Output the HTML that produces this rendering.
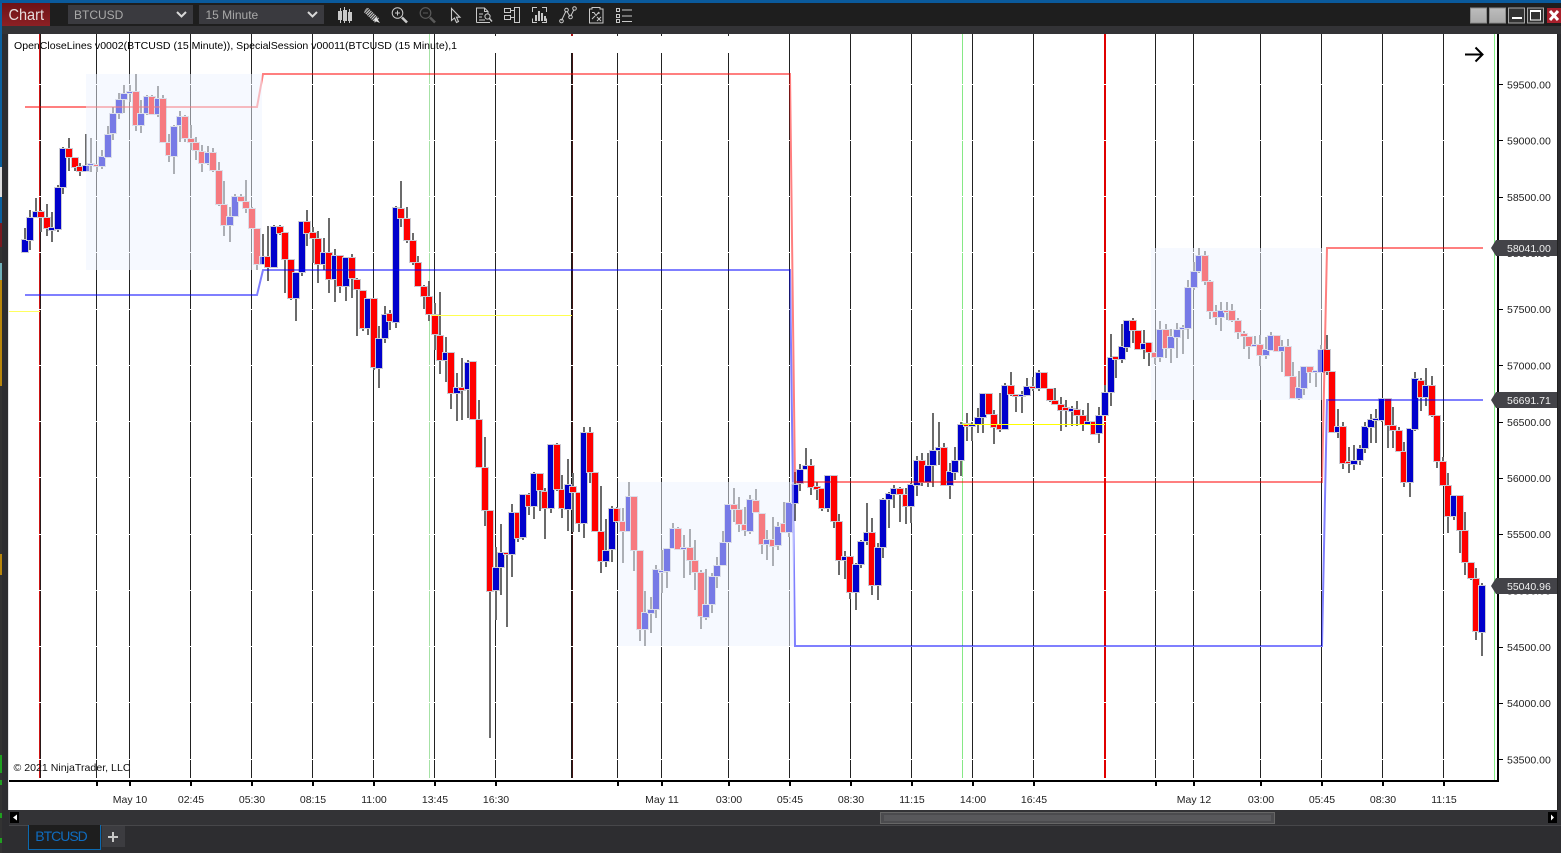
<!DOCTYPE html>
<html><head><meta charset="utf-8"><title>Chart</title>
<style>
html,body{margin:0;padding:0;width:1561px;height:853px;overflow:hidden;background:#2d2d30}
svg{display:block;font-family:"Liberation Sans",Arial,sans-serif}
.r{shape-rendering:crispEdges}
.ic{fill:none;stroke:#c9c9c9;stroke-width:1}
</style></head><body>
<svg xmlns="http://www.w3.org/2000/svg" width="1561" height="853" viewBox="0 0 1561 853">
<rect class="r" x="0" y="0" width="1561" height="853" fill="#2d2d30"/>
<!-- title bar -->
<rect class="r" x="0" y="0" width="1561" height="3" fill="#0a5a9c"/>
<rect class="r" x="0" y="3" width="1561" height="23" fill="#1e1e1e"/>
<rect class="r" x="0" y="26" width="1561" height="8" fill="#333336"/>
<!-- left strip -->
<rect class="r" x="0" y="34" width="2" height="820" fill="#333"/>
<rect class="r" x="0" y="3" width="2" height="164" fill="#0a5f9e"/>
<rect class="r" x="0" y="167" width="2" height="30" fill="#ddd"/>
<rect class="r" x="0" y="197" width="2" height="26" fill="#0a5f9e"/>
<rect class="r" x="0" y="223" width="2" height="24" fill="#7a1a20"/>
<rect class="r" x="0" y="263" width="2" height="17" fill="#70b0b8"/>
<rect class="r" x="0" y="280" width="2" height="106" fill="#b8860b"/>
<rect class="r" x="0" y="554" width="2" height="21" fill="#b8860b"/>
<rect class="r" x="0" y="755" width="2" height="18" fill="#20a020"/>
<rect class="r" x="0" y="780" width="2" height="5" fill="#20a020"/>
<rect class="r" x="0" y="813" width="2" height="5" fill="#20a020"/>
<rect class="r" x="0" y="838" width="2" height="5" fill="#20a020"/>
<rect class="r" x="8" y="34" width="1" height="776" fill="#e2e2e2"/>
<!-- chart area -->
<rect class="r" x="9" y="34" width="1548" height="776" fill="#fff"/>
<rect class="r" x="1557" y="34" width="1" height="776" fill="#222"/>
<g id="c"></g>
<!-- axes -->
<rect class="r" x="1494" y="34" width="1" height="746" fill="#86f086"/>
<rect class="r" x="1497" y="34" width="2" height="748" fill="#000"/>
<rect class="r" x="9" y="780" width="1490" height="2" fill="#000"/>
<g class="r" fill="#000">
<rect x="96" y="782" width="2" height="4"/><rect x="129" y="782" width="2" height="4"/><rect x="190" y="782" width="2" height="4"/><rect x="251" y="782" width="2" height="4"/><rect x="312" y="782" width="2" height="4"/><rect x="373" y="782" width="2" height="4"/><rect x="434" y="782" width="2" height="4"/><rect x="495" y="782" width="2" height="4"/><rect x="617" y="782" width="2" height="4"/><rect x="661" y="782" width="2" height="4"/><rect x="728" y="782" width="2" height="4"/><rect x="789" y="782" width="2" height="4"/><rect x="850" y="782" width="2" height="4"/><rect x="911" y="782" width="2" height="4"/><rect x="972" y="782" width="2" height="4"/><rect x="1033" y="782" width="2" height="4"/><rect x="1155" y="782" width="2" height="4"/><rect x="1193" y="782" width="2" height="4"/><rect x="1260" y="782" width="2" height="4"/><rect x="1321" y="782" width="2" height="4"/><rect x="1382" y="782" width="2" height="4"/><rect x="1443" y="782" width="2" height="4"/>
<rect x="1499" y="84" width="4" height="1"/><rect x="1499" y="140" width="4" height="1"/><rect x="1499" y="197" width="4" height="1"/><rect x="1499" y="253" width="4" height="1"/><rect x="1499" y="309" width="4" height="1"/><rect x="1499" y="365" width="4" height="1"/><rect x="1499" y="422" width="4" height="1"/><rect x="1499" y="478" width="4" height="1"/><rect x="1499" y="534" width="4" height="1"/><rect x="1499" y="590" width="4" height="1"/><rect x="1499" y="647" width="4" height="1"/><rect x="1499" y="703" width="4" height="1"/><rect x="1499" y="759" width="4" height="1"/>
</g>
<g font-size="10.5" fill="#1e1e1e" text-anchor="middle">
<text x="130" y="803">May 10</text><text x="191" y="803">02:45</text><text x="252" y="803">05:30</text><text x="313" y="803">08:15</text><text x="374" y="803">11:00</text><text x="435" y="803">13:45</text><text x="496" y="803">16:30</text><text x="662" y="803">May 11</text><text x="729" y="803">03:00</text><text x="790" y="803">05:45</text><text x="851" y="803">08:30</text><text x="912" y="803">11:15</text><text x="973" y="803">14:00</text><text x="1034" y="803">16:45</text><text x="1194" y="803">May 12</text><text x="1261" y="803">03:00</text><text x="1322" y="803">05:45</text><text x="1383" y="803">08:30</text><text x="1444" y="803">11:15</text>
</g>
<g font-size="10.5" fill="#1e1e1e">
<text x="1507" y="88.5">59500.00</text><text x="1507" y="144.5">59000.00</text><text x="1507" y="201">58500.00</text><text x="1507" y="257">58000.00</text><text x="1507" y="313">57500.00</text><text x="1507" y="369.5">57000.00</text><text x="1507" y="426">56500.00</text><text x="1507" y="482">56000.00</text><text x="1507" y="538">55500.00</text><text x="1507" y="594.5">55000.00</text><text x="1507" y="651">54500.00</text><text x="1507" y="707">54000.00</text><text x="1507" y="763.5">53500.00</text>
</g>
<!-- price markers -->
<g fill="#434348">
<polygon points="1491,248 1496,240 1557,240 1557,256 1496,256"/>
<polygon points="1491,400 1496,392 1557,392 1557,408 1496,408"/>
<polygon points="1491,586 1496,578 1557,578 1557,594 1496,594"/>
</g>
<g font-size="10.5" fill="#f0f0f0">
<text x="1507" y="252">58041.00</text><text x="1507" y="404">56691.71</text><text x="1507" y="590">55040.96</text>
</g>
<!-- labels -->
<text x="14" y="49" font-size="10.5" fill="#000" textLength="443" lengthAdjust="spacingAndGlyphs">OpenCloseLines v0002(BTCUSD (15 Minute)), SpecialSession v00011(BTCUSD (15 Minute),1</text>
<text x="13.5" y="771" font-size="10.5" fill="#111" textLength="117" lengthAdjust="spacingAndGlyphs">© 2021 NinjaTrader, LLC</text>
<path d="M1465 54.5H1482.5M1475.5 47.5L1482.5 54.5L1475.5 61.5" fill="none" stroke="#000" stroke-width="2"/>
<!-- toolbar -->
<defs><linearGradient id="cb" x1="0" y1="0" x2="0" y2="1"><stop offset="0" stop-color="#6e1216"/><stop offset="1" stop-color="#8c2024"/></linearGradient>
<linearGradient id="gb" x1="0" y1="0" x2="0" y2="1"><stop offset="0" stop-color="#bdbdbd"/><stop offset="1" stop-color="#a8a8a8"/></linearGradient></defs>
<rect class="r" x="2" y="3" width="48" height="23" fill="url(#cb)"/>
<text x="8.5" y="20" font-size="16" fill="#e6dcdc" textLength="35.5" lengthAdjust="spacingAndGlyphs">Chart</text>
<rect class="r" x="68" y="5" width="125" height="19" fill="#3a3a3f"/>
<text x="74" y="19" font-size="12" fill="#a9a9a9">BTCUSD</text>
<path d="M177 12l4.5 4.5 4.5-4.5" fill="none" stroke="#d8d8d8" stroke-width="2"/>
<rect class="r" x="199" y="5" width="125" height="19" fill="#3a3a3f"/>
<text x="205.5" y="19" font-size="12" fill="#a9a9a9">15 Minute</text>
<path d="M308 12l4.5 4.5 4.5-4.5" fill="none" stroke="#d8d8d8" stroke-width="2"/>
<!-- 1 candles -->
<g fill="#c9c9c9" class="r"><rect x="340" y="8" width="1" height="15"/><rect x="338" y="11" width="4" height="9"/><rect x="344" y="7" width="1" height="16"/><rect x="343" y="10" width="4" height="11"/><rect x="349" y="9" width="1" height="14"/><rect x="348" y="12" width="4" height="9"/></g>
<!-- 2 pencil -->
<path d="M366 10L377 20.5" stroke="#c9c9c9" stroke-width="6" stroke-dasharray="1.2 .8" fill="none"/>
<path d="M376 17l4 6-6-2.5z" fill="#e4e4e4"/>
<path d="M364.5 10.500l2.500-2.800 1.500 1.300-2.500 2.800z" fill="#999"/>
<!-- 3 zoom in -->
<circle cx="397.500" cy="13" r="5.300" class="ic" stroke-width="1.200"/>
<path d="M395 13h5M397.500 10.500v5" class="ic"/>
<path d="M402 17.500l5 5" stroke="#c9c9c9" stroke-width="2.600" fill="none"/>
<!-- 4 zoom out -->
<circle cx="425.500" cy="13" r="5.300" fill="none" stroke="#5a5a5a" stroke-width="1.200"/>
<path d="M423 13h5" stroke="#5a5a5a" fill="none"/>
<path d="M430 17.500l5 5" stroke="#5a5a5a" stroke-width="2.600" fill="none"/>
<!-- 5 cursor -->
<path d="M451.500 8.500V20.500L454.500 18L456.500 22.500L458.500 21.500L456.500 17.200H460z" fill="none" stroke="#c9c9c9" stroke-width="1.100"/>
<!-- 6 doc + search -->
<path d="M476.500 22.500V8H484.500L488 11.500V14M484.500 8V11.500H488M476.500 22.500H490M479 14h4M479 17h3M479 20h6" class="ic"/>
<circle cx="487.500" cy="16.500" r="2.600" class="ic"/><path d="M489.500 18.500l2.500 3" stroke="#c9c9c9" stroke-width="1.400" fill="none"/>
<!-- 7 panel -->
<g class="ic r"><rect x="504.500" y="8.500" width="6" height="4"/><rect x="504.500" y="15.500" width="6" height="4"/><rect x="514.500" y="7.500" width="5" height="15"/><path d="M510 10.500h4.500M510 17.500h4.500"/></g>
<!-- 8 scan -->
<g class="ic r"><path d="M532.500 12V7.500H537M542 7.500H546.500V12M546.500 18.500V22.500H542M537 22.500H532.500V18.500"/></g>
<g fill="#c9c9c9" class="r"><rect x="535" y="15" width="2" height="6"/><rect x="538" y="11" width="2" height="10"/><rect x="541" y="13" width="2" height="8"/><rect x="544" y="16" width="2" height="5"/></g>
<!-- 9 nodes -->
<path d="M561.500 20.500L566 11M567 11.500L570 16.500M571 15.500L574 9.500" class="ic"/>
<circle cx="561.500" cy="21" r="1.800" class="ic"/><circle cx="566.500" cy="10" r="1.800" class="ic"/><circle cx="570.500" cy="17" r="1.800" class="ic"/><circle cx="574.500" cy="8.500" r="1.800" class="ic"/>
<!-- 10 clipboard -->
<g class="ic"><path class="r" d="M589.500 9H592V7.500H600V9H603V23H589.500z"/><path d="M592 12.500h2l2 3 3-3.500M599 12l0 2M592 19l3-3M597 17l4 4M601 17l-4 4"/></g>
<!-- 11 list -->
<g class="ic r"><rect x="616.500" y="8.500" width="3" height="3"/><rect x="616.500" y="14.500" width="3" height="3"/><rect x="616.500" y="19.500" width="3" height="3"/><path d="M622 10h10M622 16h10M622 21.500h10"/></g>
<!-- window buttons -->
<rect class="r" x="1470.500" y="8" width="16" height="15" fill="url(#gb)" stroke="#8c8c8c"/>
<rect class="r" x="1489.500" y="8" width="16" height="15" fill="url(#gb)" stroke="#8c8c8c"/>
<rect class="r" x="1508.500" y="8" width="16" height="15" fill="#333" stroke="#a8a8a8"/>
<rect class="r" x="1512" y="17" width="10" height="2" fill="#fff"/>
<rect class="r" x="1527.500" y="8" width="16" height="15" fill="#333" stroke="#a8a8a8"/>
<rect class="r" x="1530.500" y="11" width="10" height="9" fill="none" stroke="#fff"/>
<rect class="r" x="1530" y="10" width="11" height="2" fill="#fff"/>
<rect class="r" x="1547" y="8" width="14" height="15" fill="#a8202c"/>
<path d="M1550 11l8 9M1558 11l-8 9" stroke="#fff" stroke-width="3" fill="none"/>
<!-- scrollbar -->
<rect class="r" x="9" y="810" width="1552" height="15" fill="#333336"/>
<rect class="r" x="9" y="825" width="1552" height="1" fill="#47474a"/>
<rect class="r" x="10" y="812" width="9" height="11" fill="#000"/>
<polygon points="13,817.500 17,814.500 17,820.500" fill="#fff"/>
<rect class="r" x="1548" y="812" width="9" height="11" fill="#000"/>
<polygon points="1554,817.500 1551,814.500 1551,820.500" fill="#fff"/>
<rect class="r" x="880.500" y="812.500" width="394" height="11" fill="#4b4b4e" stroke="#666"/>
<rect class="r" x="884" y="815" width="387" height="6" fill="#58585b"/>
<!-- tabs -->
<rect class="r" x="28" y="825" width="73" height="25" fill="#0c6ab0"/>
<rect class="r" x="29" y="825" width="71" height="24" fill="#1e1e1e"/>
<text x="35.300" y="841" font-size="14" fill="#0f6cbf" textLength="52.500">BTCUSD</text>
<rect class="r" x="102" y="826" width="23" height="21" fill="#3c3c40"/>
<path class="r" d="M108 836h10v2h-10zM112 832h2v10h-2z" fill="#c8c8c8"/>
</svg>
<script>
var d="b240 252 228 252,b218 240 210 250,b212 217 198 218,r212 217 210 232,r218 228 204 236,b228 230 212 242,b188 229 185 232,b149 187 147 194,r149 157 138 171,r158 167 158 171,r167 171 163 176,b166 171 134 172,b164 165 138 172,r165 166 165 172,b157 166 150 169,b135 157 126 158,b114 133 107 140,b100 113 93 119,b94 99 85 113,b92 93 85 102,r92 125 74 131,b114 125 100 133,b97 113 95 115,r97 114 95 115,b99 114 86 117,r99 142 95 143,r143 155 134 162,b127 156 125 174,b117 125 111 142,r117 138 115 142,r139 142 125 150,r143 150 137 160,r152 163 145 172,b153 163 146 165,r153 170 148 172,r171 204 162 206,r205 225 181 236,b217 225 207 242,b197 216 194 217,r197 201 194 202,r202 208 180 213,r209 228 207 229,r229 264 228 270,b257 264 234 265,r257 267 226 281,b227 267 225 268,r227 233 225 235,r233 259 232 293,r260 298 259 300,b273 298 273 321,b222 272 221 276,r222 233 210 246,r233 238 227 263,r239 264 231 283,b253 264 238 270,r253 279 218 293,b256 279 249 302,r256 286 255 293,b258 286 258 301,r258 278 254 298,r280 289 278 336,r291 328 290 331,b299 328 298 335,r299 367 298 370,b339 368 326 388,b315 338 306 343,r314 321 310 330,b208 322 206 328,r209 218 181 227,r219 240 207 243,r241 262 233 265,r263 286 256 287,r287 296 285 309,r297 314 281 321,r315 334 303 350,r336 360 292 374,b353 360 337 382,r353 393 353 409,b388 393 373 421,r388 390 358 420,b363 389 360 418,r362 419 361 420,r420 467 400 468,r468 510 437 526,r511 591 511 738,b568 590 547 620,b553 567 524 595,r553 554 553 627,b513 554 504 577,r513 538 513 542,b495 537 495 540,r495 506 493 515,b474 506 472 519,r474 490 474 511,r492 508 488 539,b445 508 445 513,r445 489 443 491,r490 508 475 518,b485 509 459 531,r487 492 473 532,r493 523 492 532,b433 523 427 538,r433 472 427 483,r473 531 472 532,r532 561 486 573,b551 561 519 567,b509 549 506 562,r509 521 507 523,r522 531 508 563,b497 531 482 532,r497 550 496 571,r551 629 550 641,b613 629 591 646,b610 613 597 633,b570 609 565 618,b571 572 550 593,b549 571 549 588,b529 548 523 549,r529 549 527 550,b548 549 535 578,r548 560 529 575,r561 572 540 590,r573 616 570 629,b605 617 569 620,b577 604 573 613,b566 576 557 588,b543 565 531 566,b505 542 505 543,r505 509 488 522,r510 524 497 532,r525 530 507 536,b500 531 495 534,r501 512 489 513,r514 544 513 554,b540 544 530 560,r540 546 517 566,b527 545 522 550,r524 532 502 533,b503 532 502 537,b485 503 472 521,b470 483 464 491,b466 469 448 470,r466 487 459 495,r487 489 482 500,r489 508 488 511,b476 508 476 512,r476 521 475 528,r522 560 514 575,b557 560 551 579,r557 592 556 599,b565 592 563 610,b542 564 540 568,b533 541 503 545,r533 585 518 595,b548 585 543 600,b500 547 498 558,b494 499 492 528,b489 494 485 508,r489 494 487 522,r495 506 488 524,b485 506 483 523,b461 485 456 496,r461 482 453 486,b466 482 453 487,b451 465 413 487,b448 450 422 465,r448 485 443 486,b472 485 463 499,b461 472 447 480,b425 460 422 476,r424 426 413 441,b425 426 422 441,b418 424 408 433,b394 417 393 433,r394 414 393 415,r415 427 410 444,r425 429 393 432,b386 429 383 430,r386 394 372 396,r395 396 394 412,b395 396 391 413,b387 395 378 396,r387 388 377 391,b373 388 370 391,r373 388 372 389,r389 400 388 402,r401 404 388 405,r405 410 397 431,r408 410 400 427,b409 411 406 426,r410 415 401 426,r416 424 410 431,b422 424 403 425,r422 434 421 435,b416 433 407 443,b393 415 385 416,b358 392 334 406,r357 359 356 378,b347 359 324 363,b321 347 320 352,r321 330 318 343,r331 349 330 350,b344 349 330 359,r343 352 342 366,r353 357 352 364,b330 357 321 362,r330 348 324 358,b337 348 329 363,b330 337 323 358,b328 329 325 354,b288 328 280 339,b272 287 262 290,b256 271 248 273,r256 281 251 285,r282 311 280 319,r312 317 305 325,b311 317 302 331,r311 312 302 320,r311 320 304 322,r321 332 318 339,r334 336 331 349,r337 346 336 359,b345 346 336 347,r345 355 335 366,b350 355 337 359,b336 350 332 351,r336 351 335 352,b347 351 340 372,r347 376 339 377,r377 398 362 399,b388 398 371 400,b367 388 366 395,r367 372 366 383,b371 372 372 387,b350 372 345 373,r350 371 335 375,r372 432 371 433,b427 432 409 438,r427 463 422 469,r462 463 447 473,b461 464 445 470,b449 460 445 465,b427 448 422 453,b420 427 414 443,b419 420 409 443,b399 420 398 422,r399 425 398 448,r426 430 407 448,r431 451 427 452,r452 482 442 487,b429 482 428 497,b379 429 372 431,r381 397 378 411,b386 397 368 406,r386 415 376 417,r416 461 415 468,r462 485 457 486,r486 516 473 533,b496 516 495 520,r496 530 495 553,r531 562 512 575,r563 578 562 580,r579 631 568 640,b586 632 583 656".split(",");
function R(x,y,w,h,f){return '<rect class="r" x="'+x+'" y="'+y+'" width="'+w+'" height="'+h+'" fill="'+f+'"/>';}
var s="",dk="#222222";
var v=[[39,1,"#cc1414",34],[40,1,"#2a1a1a",34],[96,1,dk,34],[129,1,dk,34],[190,1,dk,34],[251,1,dk,34],[312,1,dk,34],[373,1,dk,34],[429,1,"#a6e2a6",34],[434,1,dk,34],[495,1,dk,53],[571,1,"#1a1a1a",53],[572,1,"#401414",53],[617,1,dk,53],[661,1,dk,53],[728,1,dk,53],[789,1,dk,34],[850,1,dk,34],[911,1,dk,34],[962,1,"#86e886",34],[972,1,dk,34],[1033,1,dk,34],[1104,2,"#e00000",34],[1155,1,dk,34],[1193,1,dk,34],[1260,1,dk,34],[1321,1,dk,34],[1382,1,dk,34],[1443,1,dk,34]];
v.forEach(function(a){s+=R(a[0],a[3],a[1],778-a[3],a[2]);});
[495,617,661,728].forEach(function(x){s+=R(x,34,1,2,dk);});
s+=R(571,34,2,2,"#b01414");
for(var k=0;k<13;k++){s+=R(9,Math.round(83.5+56.25*k),1485,1,"#fff");}
/* wicks */
var rows=d.map(function(t,i){var c=t[0],n=t.slice(1).split(" ").map(Number);return{x:Math.round(24.7+5.54*i),c:c,t:n[0],b:n[1],h:n[2],l:n[3]};});
rows.forEach(function(o){var h=Math.min(o.h,o.t),l=Math.max(o.l,o.b);s+=R(o.x-1,h,2,l-h,"#6b6b6b");});
rows.forEach(function(o){var hh=Math.max(o.b-o.t,1);s+=R(o.x-4,o.t-1,8,hh+2,"#c9c9d2");s+=R(o.x-3,o.t,6,hh,o.c=="b"?"#0000cc":"#ff0000");});
/* open/close lines */
s+='<path d="M25 107H257L263 74H790L795 482H1322L1327 248H1483" fill="none" stroke="rgba(255,0,0,.5)" stroke-width="2"/>';
s+='<path d="M25 295H257L263 270H790L795 646H1322L1327 400H1483" fill="none" stroke="rgba(0,0,255,.5)" stroke-width="2"/>';
/* sessions */
var ov="rgba(237,243,255,.5)";
s+=R(86,74,176,196,ov)+R(618,482,176,164,ov)+R(1151,248,171,152,ov);
/* yellow */
s+=R(962,424,143,1,"#ffff00")+R(431,315,141,1,"#ffff50")+R(9,311,31,1,"#ffff60");
document.getElementById("c").innerHTML=s;
</script>
</body></html>
